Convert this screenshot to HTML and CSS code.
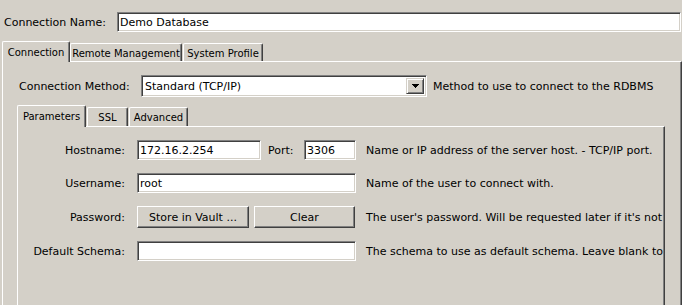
FILE: index.html
```html
<!DOCTYPE html>
<html lang="en">
  <head>
    <meta charset="UTF-8" />
    <title>Connection Settings</title>
    <link rel="stylesheet" href="styles.css">
  </head>
  <body>
    <div class="name-row">
      <label>Connection Name:</label>
      <input class="field name-field" type="text" value="Demo Database" />
    </div>

    <div class="tabs outer-tabs">
      <span class="tab active tab-connection">Connection</span>
      <span class="tab tab-remote">Remote Management</span>
      <span class="tab tab-profile">System Profile</span>
    </div>

    <div class="panel outer-panel">
      <div class="method-row">
        <label>Connection Method:</label>
        <div class="combo">
          <span class="combo-text">Standard (TCP/IP)</span>
          <span class="combo-btn">
            <svg width="7" height="4" viewBox="0 0 7 4" shape-rendering="crispEdges">
              <rect x="0" y="0" width="7" height="1" fill="#000" />
              <rect x="1" y="1" width="5" height="1" fill="#000" />
              <rect x="2" y="2" width="3" height="1" fill="#000" />
              <rect x="3" y="3" width="1" height="1" fill="#000" />
            </svg>
          </span>
        </div>
        <span class="hint">Method to use to connect to the RDBMS</span>
      </div>

      <div class="tabs inner-tabs">
        <span class="tab active tab-params">Parameters</span>
        <span class="tab tab-ssl">SSL</span>
        <span class="tab tab-advanced">Advanced</span>
      </div>

      <div class="panel inner-panel">
        <div class="params">
          <label>Hostname:</label>
          <div class="host-cell">
            <input class="field host-field" type="text" value="172.16.2.254" />
            <label class="port-label">Port:</label>
            <input class="field port-field" type="text" value="3306" />
          </div>
          <span class="hint">Name or IP address of the server host. - TCP/IP port.</span>

          <label>Username:</label>
          <input class="field" type="text" value="root" />
          <span class="hint">Name of the user to connect with.</span>

          <label>Password:</label>
          <div class="btn-cell">
            <button class="btn vault-btn">Store in Vault ...</button>
            <button class="btn clear-btn">Clear</button>
          </div>
          <span class="hint">The user's password. Will be requested later if it's not set.</span>

          <label>Default Schema:</label>
          <input class="field" type="text" value="" />
          <span class="hint">The schema to use as default schema. Leave blank to select it later.</span>
        </div>
      </div>
    </div>
  </body>
</html>
```

FILE: styles.css
```css
body {
  margin: 0;
  width: 682px;
  height: 305px;
  overflow: hidden;
  background-color: #d4d0c8;
  color: #000;
  font: 11px "DejaVu Sans", sans-serif;
}

label,
.hint {
  white-space: nowrap;
}

/* sunken text box */
.field {
  box-sizing: border-box;
  height: 20px;
  margin: 0;
  padding: 0 0 0 2px;
  border: 1px solid;
  border-color: #808080 #fff #fff #808080;
  box-shadow: inset 1px 1px #404040, inset -1px -1px #d4d0c8;
  background-color: #fff;
  color: #000;
  font: inherit;
  outline: none;
}

/* raised push button */
.btn {
  box-sizing: border-box;
  height: 22px;
  margin: 0;
  padding: 0;
  border: 1px solid;
  border-color: #fff #404040 #404040 #fff;
  box-shadow: inset -1px -1px #808080;
  background-color: #d4d0c8;
  color: #000;
  font: inherit;
}

.name-row {
  display: flex;
  align-items: center;
  margin-top: 12px;
}

.name-row label {
  width: 113px;
  padding-left: 4px;
}

.name-field {
  flex: 1;
  margin-right: 1px;
}

/* tab strips */
.tabs {
  display: flex;
  align-items: flex-end;
}

.tab {
  box-sizing: border-box;
  display: flex;
  align-items: center;
  justify-content: center;
  margin-right: 1px;
  padding-top: 1px;
  border-top: 1px solid #fff;
  border-left: 1px solid #fff;
  border-right: 1px solid #404040;
  border-radius: 2px 2px 0 0;
  box-shadow: inset -1px 0 #808080;
  font-size: 10px;
}

.tab.active {
  position: relative;
  z-index: 1;
  margin-right: 0;
  margin-bottom: -1px;
  padding-top: 0;
  background-color: #d4d0c8;
}

.outer-tabs {
  height: 20px;
  margin-top: 9px;
  padding-left: 2px;
}

.outer-tabs .tab {
  height: 18px;
}

.outer-tabs .tab.active {
  height: 21px;
}

.tab-connection { width: 68px; }
.tab-remote { width: 112px; }
.tab-profile { width: 80px; }

.inner-tabs {
  height: 21px;
  margin: 8px 0 0 14px;
}

.inner-tabs .tab {
  height: 19px;
}

.inner-tabs .tab.active {
  height: 22px;
  margin-right: 1px;
}

.tab-params { width: 69px; }
.tab-ssl { width: 41px; }
.tab-advanced { width: 59px; }

.panel {
  border-top: 1px solid #fff;
  border-left: 1px solid #fff;
  border-right: 1px solid #404040;
  box-shadow: inset -1px 0 #808080;
}

.outer-panel {
  height: 300px;
  margin-left: 2px;
}

.method-row {
  display: flex;
  align-items: center;
  padding: 13px 0 0 16px;
}

.method-row label {
  width: 122px;
}

.combo {
  box-sizing: border-box;
  display: flex;
  align-items: center;
  width: 286px;
  height: 22px;
  padding: 2px;
  border: 1px solid;
  border-color: #808080 #fff #fff #808080;
  box-shadow: inset 1px 1px #404040, inset -1px -1px #d4d0c8;
  background-color: #fff;
}

.combo-text {
  flex: 1;
  padding-left: 1px;
}

.combo-btn {
  box-sizing: border-box;
  display: flex;
  align-items: center;
  justify-content: center;
  width: 18px;
  height: 100%;
  border: 1px solid;
  border-color: #d4d0c8 #404040 #404040 #d4d0c8;
  box-shadow: inset 1px 1px #fff, inset -1px -1px #808080;
  background-color: #d4d0c8;
}

.method-row .hint {
  margin-left: 6px;
}

.inner-panel {
  height: 200px;
  margin: 0 16px 0 14px;
  overflow: hidden;
}

.params {
  display: grid;
  grid-template-columns: 119px 219px minmax(0, 1fr);
  grid-template-rows: 20px 20px 22px 20px;
  row-gap: 13px;
  align-items: center;
  padding-top: 13px;
}

.params > label {
  padding-right: 12px;
  text-align: right;
}

.params .hint {
  overflow: hidden;
  padding-left: 10px;
}

.host-cell,
.btn-cell {
  display: flex;
  align-items: center;
}

.host-field {
  width: 124px;
}

.port-label {
  margin-left: 7px;
}

.port-field {
  width: 52px;
  margin-left: auto;
}

.vault-btn {
  width: 112px;
}

.clear-btn {
  width: 101px;
  margin-left: 5px;
}
```
